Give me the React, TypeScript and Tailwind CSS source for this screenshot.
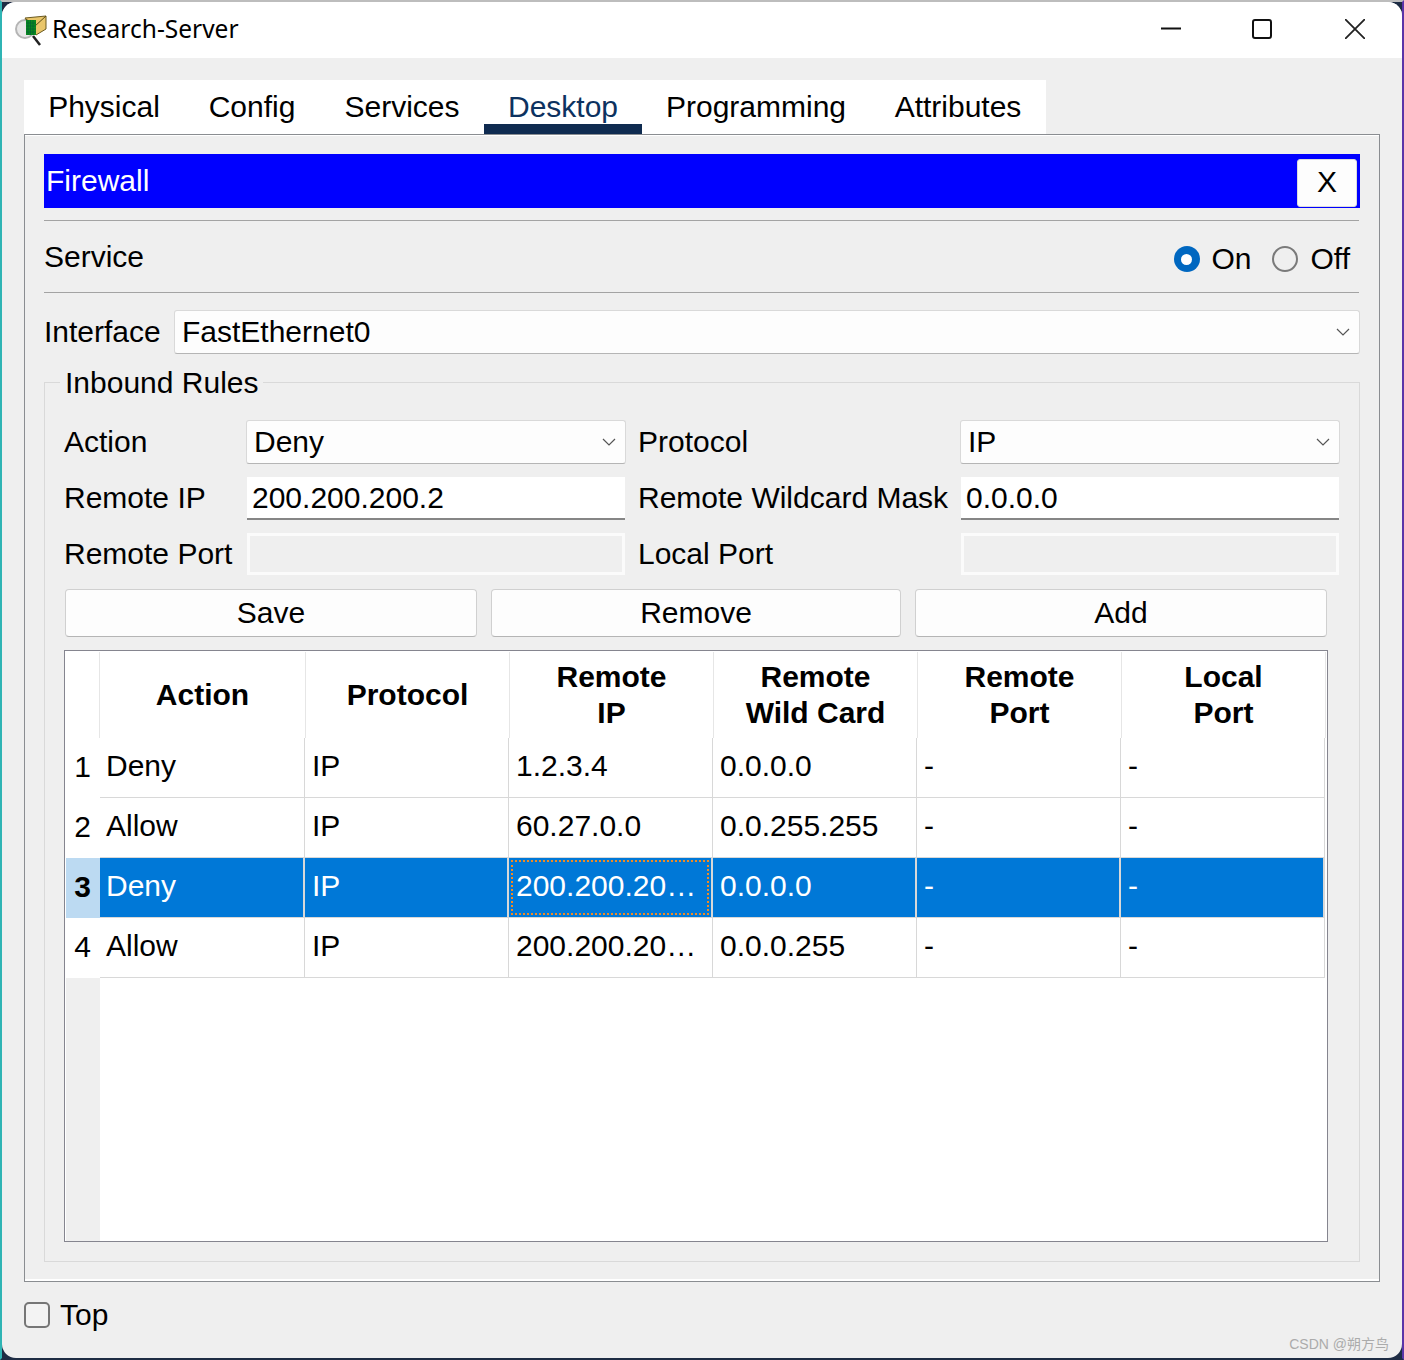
const tabs = [
  { label: "Physical", width: "w-[160px]" },
  { label: "Config", width: "w-[136px]" },
  { label: "Services", width: "w-[164px]" },
  { label: "Desktop", width: "w-[158px]" },
  { label: "Programming", width: "w-[228px]" },
  { label: "Attributes", width: "w-[176px]" },
];

const headers = ["Action", "Protocol", "Remote\nIP", "Remote\nWild Card", "Remote\nPort", "Local\nPort"];

const rules = [
  { n: 1, action: "Deny", ip: "1.2.3.4", wild: "0.0.0.0" },
  { n: 2, action: "Allow", ip: "60.27.0.0", wild: "0.0.255.255" },
  { n: 3, action: "Deny", ip: "200.200.20…", wild: "0.0.0.0", selected: true },
  { n: 4, action: "Allow", ip: "200.200.20…", wild: "0.0.0.255" },
];

function Chevron() {
  return (
    <svg width="14" height="8" viewBox="0 0 14 8" fill="none" stroke="#555" strokeWidth="1.2">
      <path d="M1 1l6 6 6-6" />
    </svg>
  );
}

function Select({ value, className = "" }: { value: string; className?: string }) {
  return (
    <div className={`flex h-11 items-center justify-between rounded-[3px] border border-[#d9d9d9] border-b-[#b5b5b5] bg-[#fdfdfd] pl-[7px] pr-[9px] ${className}`}>
      <span>{value}</span>
      <Chevron />
    </div>
  );
}

function AppIcon() {
  return (
    <svg width="32" height="32" viewBox="0 0 32 32">
      <path d="M18 22l7 9" stroke="#222" strokeWidth="2.5" />
      <circle cx="10" cy="15" r="9" fill="#e8e8e8" stroke="#b5b5b5" strokeWidth="2" />
      <path d="M10 4l21-2v13l-10 6z" fill="#e9c66a" stroke="#6b5a20" strokeWidth="1" />
      <path d="M11 5l9 7 11-10" fill="none" stroke="#5b4a14" strokeWidth="1" />
      <rect x="11" y="6" width="10" height="15" fill="#0a8a1e" />
      <path d="M13 6v15M15.500 6v15M18 6v15M11 9h10M11 12h10M11 15h10M11 18h10" stroke="#063" strokeWidth="0.8" />
    </svg>
  );
}

export default function App() {
  return (
    <div className="h-[1360px] w-[1404px] overflow-hidden border-x-2 border-t-2 border-b-2 border-t-[#bdbdbd] border-r-[#5b34a8] border-b-[#1e2c44] border-l-[#2fb4b4] bg-[#1e2c44] font-['Liberation_Sans',sans-serif] text-[30px] leading-[34px] text-black">
      <div className="relative flex h-full flex-col overflow-hidden rounded-[14px] bg-[#efefef]">
        <div className="flex h-14 items-center bg-white pb-[2px]">
          <div className="ml-[13px] mr-[5px] mt-[2px]">
            <AppIcon />
          </div>
          <span className="font-['Noto_Sans',sans-serif] text-[24.5px] leading-none">Research-Server</span>
          <div className="ml-auto mr-px flex">
            <div className="flex h-[54px] w-[88px] items-center justify-center">
              <svg width="20" height="20" viewBox="0 0 20 20"><path d="M0 9.500h20" stroke="#111" strokeWidth="2" /></svg>
            </div>
            <div className="flex h-[54px] w-[94px] items-center justify-center">
              <svg width="20" height="20" viewBox="0 0 20 20" fill="none"><rect x="1" y="1" width="18" height="18" rx="2" stroke="#111" strokeWidth="2" /></svg>
            </div>
            <div className="flex h-[54px] w-[92px] items-center justify-center">
              <svg width="20" height="20" viewBox="0 0 20 20" fill="none"><path d="M0 0l20 20M20 0L0 20" stroke="#222" strokeWidth="1.800" /></svg>
            </div>
          </div>
        </div>

        <div className="flex flex-col px-[22px] pt-[22px]">
          <div className="flex h-[54px] w-[1022px] bg-white">
            {tabs.map((tab) => (
              <div
                key={tab.label}
                className={`${tab.width} pt-[10px] text-center ${
                  tab.label === "Desktop" ? "border-b-[10px] border-[#0f2b50] text-[#0d3260]" : ""
                }`}
              >
                {tab.label}
              </div>
            ))}
          </div>

          <div className="h-[1148px] w-[1356px] border border-[#8a8d91] px-[19px] pt-[19px] shadow-[inset_0_1px_0_#fff,inset_0_-2px_0_#fff]">
            <div className="flex h-[54px] w-[1316px] items-end justify-between bg-[#0000ff] pb-px pl-[2px] pr-[3px] text-white">
              <span className="self-center">Firewall</span>
              <div className="flex h-12 w-[60px] items-center justify-center rounded-[3px] border border-[#dcdcdc] bg-[#fdfdfd] pb-[2px] text-black">X</div>
            </div>
            <div className="mt-3 flex h-[73px] w-[1315px] items-center justify-between border-y border-[#a3a3a3] pr-[9px]">
              <span>Service</span>
              <div className="flex items-center pt-[5px]">
                <span className="flex size-[26px] items-center justify-center rounded-full bg-[#0067c0]">
                  <span className="size-[11px] rounded-full bg-white" />
                </span>
                <span className="ml-3">On</span>
                <span className="ml-[20px] size-[26px] rounded-full border-2 border-[#7a7a7a]" />
                <span className="ml-[13px]">Off</span>
              </div>
            </div>

            <div className="mt-[17px] flex w-[1316px] items-center justify-between">
              <span>Interface</span>
              <Select value="FastEthernet0" className="w-[1186px]" />
            </div>

            <fieldset className="mt-[10px] h-[898px] w-[1316px] border border-[#d9d9d9] px-[19px] pt-[20px]">
              <legend className="-ml-1 px-[5px] pt-[2px]">Inbound Rules</legend>
              <div className="grid auto-rows-[44px] grid-cols-[182px_380px_334px_380px] items-center gap-y-3 whitespace-nowrap">
                <span>Action</span>
                <Select value="Deny" />
                <span className="pl-3">Protocol</span>
                <Select value="IP" />

                <span>Remote IP</span>
                <div className="mx-px flex h-[43px] items-center self-end border-b-2 border-[#868686] bg-white px-[5px]">200.200.200.2</div>
                <span className="pl-3">Remote Wildcard Mask</span>
                <div className="mx-px flex h-[43px] items-center self-end border-b-2 border-[#868686] bg-white px-[5px]">0.0.0.0</div>

                <span>Remote Port</span>
                <div className="mx-px h-[42px] border-[3px] border-[#fbfbfb] bg-[#efefef]" />
                <span className="pl-3">Local Port</span>
                <div className="mx-px h-[42px] border-[3px] border-[#fbfbfb] bg-[#efefef]" />
              </div>

              <div className="ml-px mt-[13px] flex w-[1262px] justify-between">
                {["Save", "Remove", "Add"].map((label) => (
                  <div
                    key={label}
                    className={`flex h-12 items-center justify-center rounded-[4px] border border-[#d0d0d0] border-b-[#b5b5b5] bg-[#fdfdfd] ${
                      label === "Remove" ? "w-[410px]" : "w-[412px]"
                    }`}
                  >
                    {label}
                  </div>
                ))}
              </div>

              <div className="mt-[13px] h-[592px] w-[1264px] border border-[#85858f] bg-white">
                <div className="flex h-full flex-col pl-px pt-px">
                  <div className="grid h-[86px] grid-cols-[34px_206px_repeat(5,204px)] text-center font-bold">
                    <div className="border-r border-[#e6e6e6]" />
                    {headers.map((h) => (
                      <div key={h} className="flex items-center justify-center whitespace-pre-line border-r border-[#e6e6e6] leading-9">
                        {h}
                      </div>
                    ))}
                  </div>
                  {rules.map((r) => (
                    <div key={r.n} className="grid h-[60px] grid-cols-[34px_205px_repeat(5,204px)] items-stretch">
                      <div className={`flex items-center justify-end pb-[2px] pr-[9px] ${r.selected ? "bg-[#bcdaf2] font-bold" : ""}`}>{r.n}</div>
                      {[r.action, "IP", r.ip, r.wild, "-", "-"].map((cell, i) => (
                        <div
                          key={i}
                          className={`relative flex items-center border-b border-[#d8d8d8] pb-[3px] ${i === 0 ? "pl-[6px]" : "pl-[7px]"} ${
                            r.selected ? "border-r-2 bg-[#0078d7] text-white" : "border-r"
                          }`}
                        >
                          {cell}
                          {i === 2 && r.selected && (
                            <span className="absolute inset-[2px] border-2 border-dotted border-[#f08a24]" />
                          )}
                        </div>
                      ))}
                    </div>
                  ))}
                  <div className="w-[34px] flex-1 bg-[#efefef]" />
                </div>
              </div>
            </fieldset>
          </div>

          <div className="mt-4 flex items-center">
            <span className="size-[26px] rounded-[5px] border-2 border-[#767676] bg-[#f3f3f3]" />
            <span className="ml-[10px]">Top</span>
          </div>
        </div>

        <span className="absolute right-[13px] bottom-[6px] font-['Liberation_Sans','Noto_Sans_CJK_SC',sans-serif] text-[14px] leading-4 text-[#ababab]">
          CSDN @朔方鸟
        </span>
      </div>
    </div>
  );
}
